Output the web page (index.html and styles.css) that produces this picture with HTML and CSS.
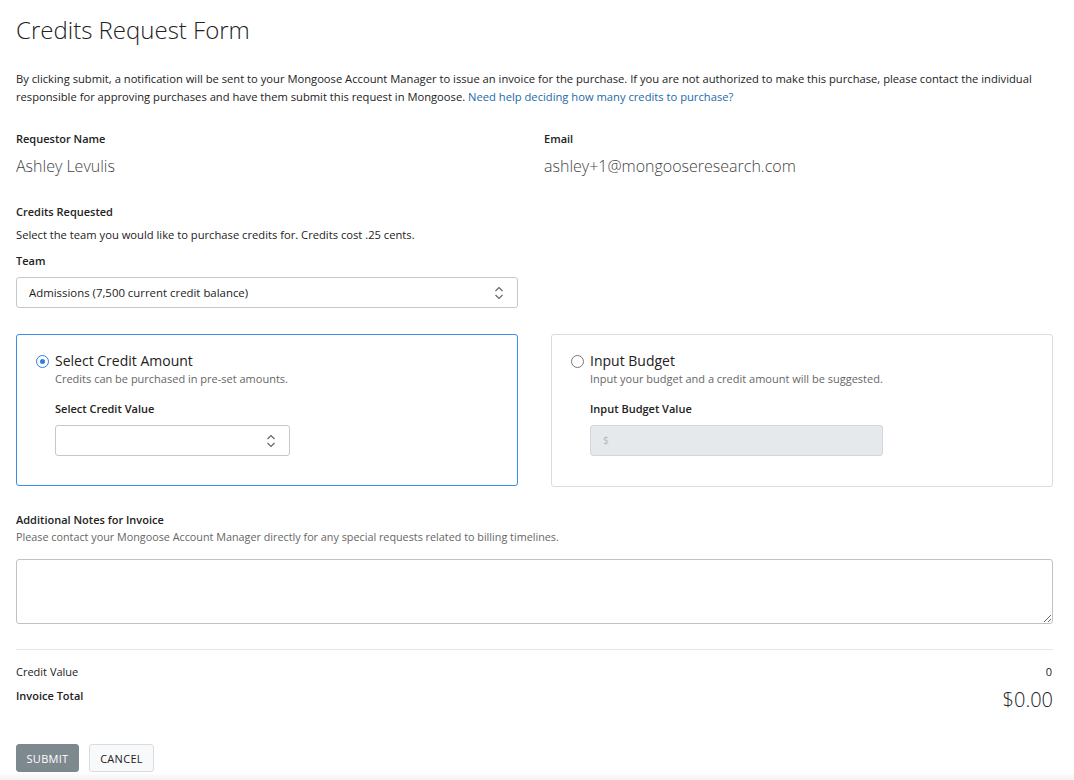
FILE: index.html
```html
<!DOCTYPE html>
<html>
<head>
<meta charset="utf-8">
<link rel="stylesheet" href="styles.css">
</head>
<body>
<div class="page">
  <h1 class="title">Credits Request Form</h1>
  <p class="intro">By clicking submit, a notification will be sent to your Mongoose Account Manager to issue an invoice for the purchase. If you are not authorized to make this purchase, please contact the individual responsible for approving purchases and have them submit this request in Mongoose. <a class="link" href="#">Need help deciding how many credits to purchase?</a></p>

  <div class="info-row">
    <div class="info-col">
      <div class="label">Requestor Name</div>
      <div class="value">Ashley Levulis</div>
    </div>
    <div class="info-col">
      <div class="label">Email</div>
      <div class="value">ashley+1@mongooseresearch.com</div>
    </div>
  </div>

  <div class="section">
    <div class="label">Credits Requested</div>
    <div class="desc">Select the team you would like to purchase credits for. Credits cost .25 cents.</div>
    <div class="label team-label">Team</div>
    <div class="select team-select">
      <span class="select-text">Admissions (7,500 current credit balance)</span>
      <svg class="chev" width="10" height="14" viewBox="0 0 10 14"><path d="M1.5 5 L5 1.5 L8.5 5 M1.5 9 L5 12.5 L8.5 9" fill="none" stroke="#666" stroke-width="1.2"/></svg>
    </div>
  </div>

  <div class="cards">
    <div class="card card-active">
      <div class="card-head">
        <span class="radio radio-on"></span>
        <div>
          <div class="card-title">Select Credit Amount</div>
          <div class="card-sub">Credits can be purchased in pre-set amounts.</div>
        </div>
      </div>
      <div class="card-body">
        <div class="label">Select Credit Value</div>
        <div class="select credit-select">
          <span class="select-text"></span>
          <svg class="chev" width="10" height="14" viewBox="0 0 10 14"><path d="M1.5 5 L5 1.5 L8.5 5 M1.5 9 L5 12.5 L8.5 9" fill="none" stroke="#666" stroke-width="1.2"/></svg>
        </div>
      </div>
    </div>
    <div class="card">
      <div class="card-head">
        <span class="radio"></span>
        <div>
          <div class="card-title">Input Budget</div>
          <div class="card-sub">Input your budget and a credit amount will be suggested.</div>
        </div>
      </div>
      <div class="card-body">
        <div class="label">Input Budget Value</div>
        <div class="budget-input">$</div>
      </div>
    </div>
  </div>

  <div class="notes">
    <div class="label">Additional Notes for Invoice</div>
    <div class="desc muted">Please contact your Mongoose Account Manager directly for any special requests related to billing timelines.</div>
    <textarea class="textarea"></textarea>
  </div>

  <hr class="divider">

  <div class="summary">
    <div class="sum-row">
      <span class="sum-label">Credit Value</span>
      <span class="sum-val">0</span>
    </div>
    <div class="sum-row total-row">
      <span class="sum-label strong">Invoice Total</span>
      <span class="total">$0.00</span>
    </div>
  </div>

  <div class="buttons">
    <button class="btn btn-submit">SUBMIT</button>
    <button class="btn btn-cancel">CANCEL</button>
  </div>
</div>
<div class="bottom-shade"></div>
</body>
</html>
```

FILE: styles.css
```css
* { box-sizing: border-box; }
html, body { margin: 0; padding: 0; background: #fff; }
body {
  font-family: "Open Sans", "Noto Sans", sans-serif;
  color: #222;
  font-size: 11px;
}
.page {
  padding: 14px 21px 0 16px;
}
.title {
  margin: 0;
  font-size: 24px;
  font-weight: 300;
  line-height: 32px;
  color: #222;
}
.intro {
  margin: 24px 0 0 0;
  font-size: 11.2px;
  line-height: 18px;
  color: #222;
}
.link { color: #1c6aa8; text-decoration: none; }
.info-row {
  display: grid;
  grid-template-columns: 528px 1fr;
  margin-top: 25px;
}
.label {
  font-size: 11px;
  font-weight: 600;
  line-height: 16px;
  color: #222;
}
.value {
  margin-top: 8px;
  font-size: 16px;
  font-weight: 300;
  line-height: 22px;
  color: #444;
}
.section { margin-top: 27px; }
.desc {
  margin-top: 7px;
  font-size: 11.2px;
  line-height: 16px;
  color: #222;
}
.desc.muted { margin-top: 1px; color: #666; font-size: 10.8px; }
.team-label { margin-top: 10px; }
.select {
  display: flex;
  align-items: center;
  justify-content: space-between;
  height: 31px;
  border: 1px solid #c4c8cc;
  border-radius: 3px;
  padding: 0 13px 0 12px;
  background: #fff;
  margin-top: 8px;
}
.team-select { width: 502px; }
.select-text { font-size: 11.4px; color: #222; }
.chev { display: block; }
.cards {
  display: grid;
  grid-template-columns: 502px 502px;
  column-gap: 33px;
  margin-top: 26px;
}
.card {
  height: 153px;
  border: 1px solid #d6dde4;
  border-radius: 3px;
  padding: 16px 20px 0 19px;
}
.card-active { border-color: #3a8de6; height: 152px; }
.card-head {
  display: flex;
  align-items: flex-start;
  gap: 6px;
}
.radio {
  flex: none;
  width: 13px;
  height: 13px;
  border: 1px solid #777;
  border-radius: 50%;
  margin-top: 4px;
  background: #fff;
  position: relative;
}
.radio-on { border-color: #2f7fe0; }
.radio-on::after {
  content: "";
  position: absolute;
  left: 3px; top: 3px;
  width: 5px; height: 5px;
  border-radius: 50%;
  background: #2f7fe0;
}
.card-title {
  font-size: 14px;
  line-height: 20px;
  color: #222;
}
.card-sub {
  font-size: 11px;
  line-height: 16px;
  color: #666;
}
.card-body {
  padding-left: 19px;
  margin-top: 14px;
}
.credit-select { width: 235px; }
.budget-input {
  width: 293px;
  height: 31px;
  margin-top: 8px;
  background: #e6e9ec;
  border: 1px solid #d3d7db;
  border-radius: 3px;
  padding: 0 12px;
  line-height: 29px;
  font-size: 10px;
  color: #b4b9be;
}
.notes { margin-top: 25px; }
.textarea {
  display: block;
  width: 100%;
  height: 65px;
  margin-top: 14px;
  border: 1px solid #bfc3c7;
  border-radius: 3px;
  resize: vertical;
  font-family: inherit;
  background: #fff;
}
.divider {
  margin: 25px 0 0 0;
  border: 0;
  border-top: 1px solid #e3e6e9;
  height: 0;
}
.summary { margin-top: 14px; }
.sum-row {
  display: flex;
  justify-content: space-between;
  align-items: flex-start;
  line-height: 16px;
}
.sum-label { font-size: 11px; color: #222; }
.sum-label.strong { font-weight: 600; }
.sum-val { font-size: 11px; color: #222; padding-right: 1px; }
.total-row { margin-top: 8px; }
.total {
  font-size: 20px;
  line-height: 24px;
  font-weight: 300;
  color: #222;
}
.buttons {
  display: flex;
  gap: 10px;
  margin-top: 32px;
}
.btn {
  height: 28px;
  border-radius: 3px;
  font-family: inherit;
  font-size: 11px;
  letter-spacing: 0.3px;
  padding: 0 8px;
  cursor: pointer;
}
.btn-submit {
  background: #7e888f;
  color: #fff;
  border: 1px solid #7e888f;
  width: 63px;
}
.btn-cancel {
  background: #f7f9fb;
  color: #222;
  border: 1px solid #d8dde2;
  width: 65px;
}
.bottom-shade {
  position: fixed;
  left: 0; right: 0; bottom: 0;
  height: 6px;
  background: linear-gradient(#fbfbfb, #f2f2f2);
  pointer-events: none;
}
```
